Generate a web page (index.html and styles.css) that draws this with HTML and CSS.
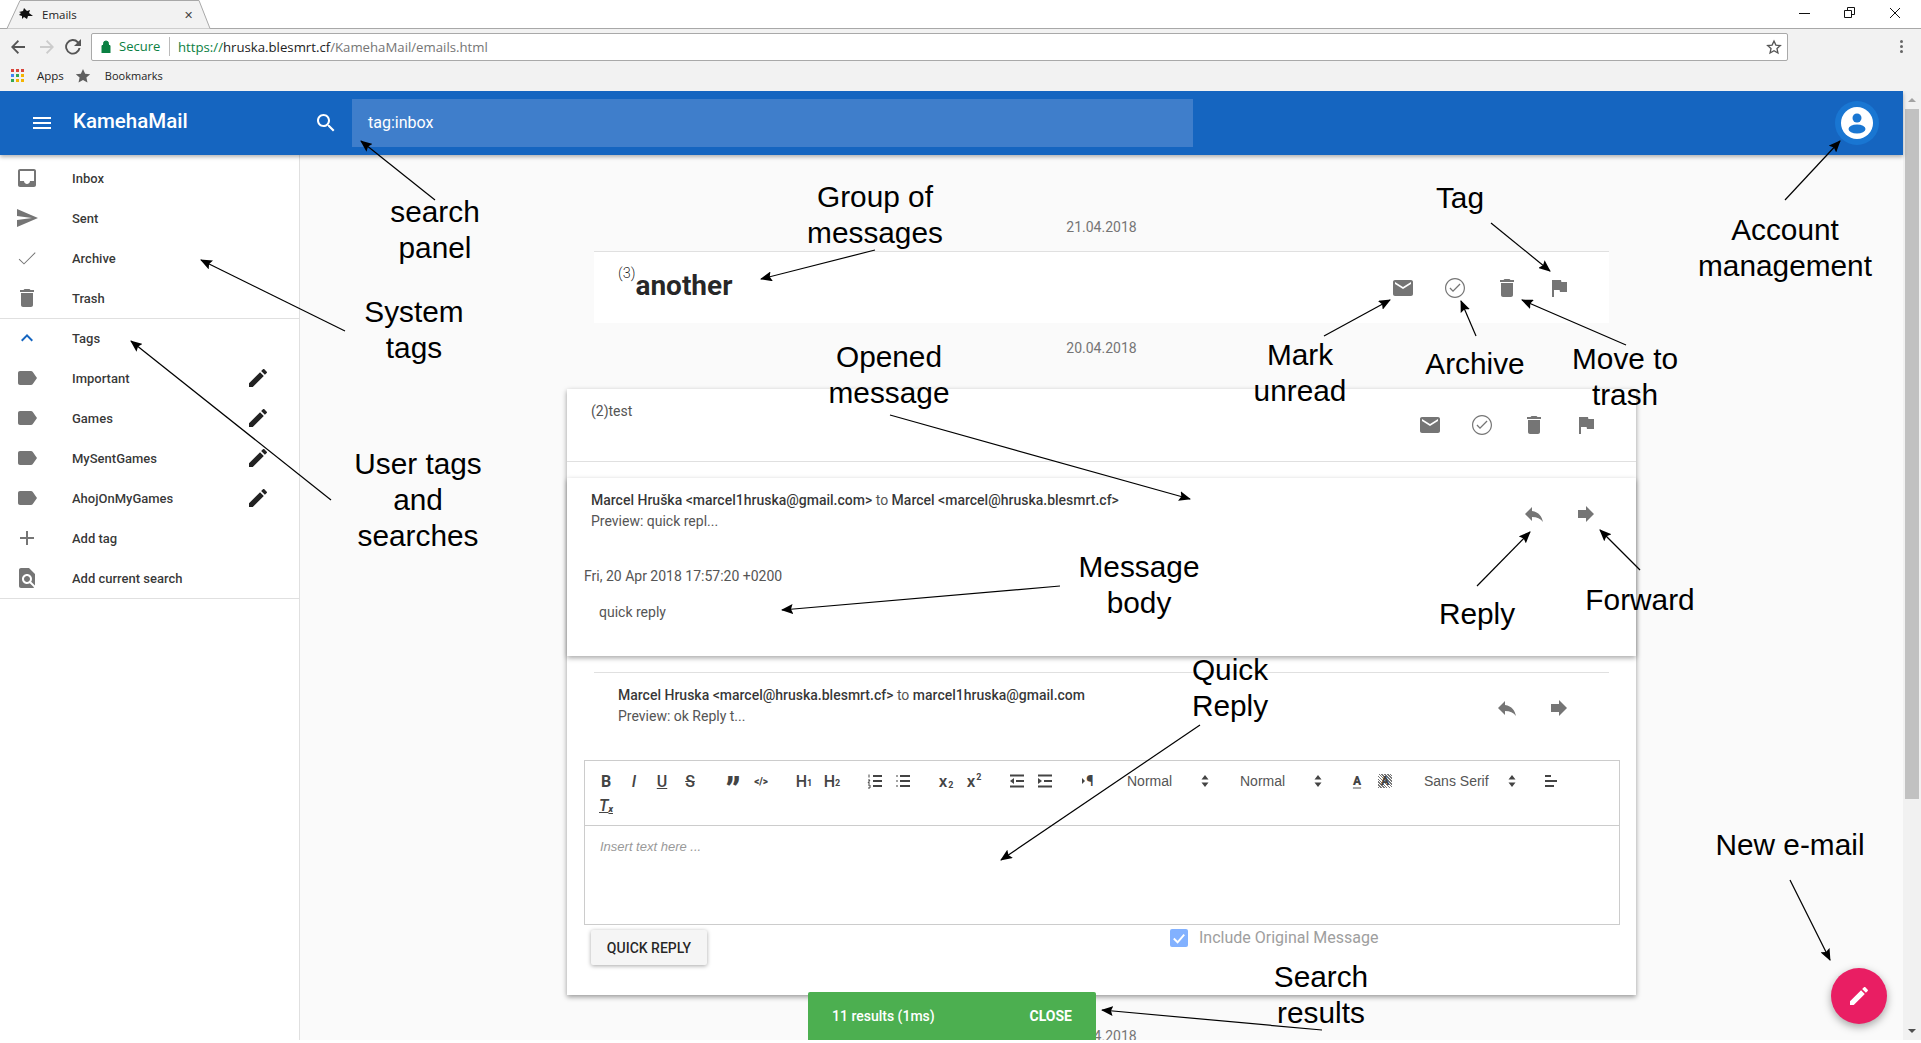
FILE: index.html
```html
<!DOCTYPE html>
<html lang="en">
<head>
    <meta charset="UTF-8">
    <title>Emails</title>
    <link rel="stylesheet" href="styles.css">
</head>
<body>
    <svg class="sprites" width="0" height="0">
        <symbol id="i-inbox" viewBox="0 0 24 24"><path d="M19 3H4.99c-1.11 0-1.98.89-1.98 2L3 19c0 1.1.88 2 1.99 2H19c1.1 0 2-.9 2-2V5c0-1.11-.9-2-2-2zm0 12h-4c0 1.66-1.35 3-3 3s-3-1.34-3-3H4.99V5H19v10z"/></symbol>
        <symbol id="i-send" viewBox="0 0 24 24"><path d="M2.01 21L23 12 2.01 3 2 10l15 2-15 2z"/></symbol>
        <symbol id="i-done" viewBox="0 0 24 24"><path d="M9 17.2L4.4 12.7l-.7.7L9 18.6 20.6 7l-.7-.7z"/></symbol>
        <symbol id="i-trash" viewBox="0 0 24 24"><path d="M6 19c0 1.1.9 2 2 2h8c1.1 0 2-.9 2-2V7H6v12zM19 4h-3.5l-1-1h-5l-1 1H5v2h14V4z"/></symbol>
        <symbol id="i-less" viewBox="0 0 24 24"><path d="M12 8l-6 6 1.41 1.41L12 10.83l4.59 4.58L18 14z"/></symbol>
        <symbol id="i-label" viewBox="0 0 24 24"><path d="M17.63 5.84C17.27 5.33 16.67 5 16 5L5 5.01C3.9 5.01 3 5.9 3 7v10c0 1.1.9 1.99 2 1.99L16 19c.67 0 1.27-.33 1.63-.84L22 12l-4.37-6.16z"/></symbol>
        <symbol id="i-edit" viewBox="0 0 24 24"><path d="M3 17.25V21h3.75L17.81 9.94l-3.75-3.75L3 17.25zM20.71 7.04c.39-.39.39-1.02 0-1.41l-2.34-2.34c-.39-.39-1.02-.39-1.41 0l-1.83 1.83 3.75 3.75 1.83-1.83z"/></symbol>
        <symbol id="i-add" viewBox="0 0 24 24"><path d="M19 13h-6v6h-2v-6H5v-2h6V5h2v6h6v2z"/></symbol>
        <symbol id="i-find" viewBox="0 0 24 24"><path d="M20 19.59V8l-6-6H6c-1.1 0-1.99.9-1.99 2L4 20c0 1.1.89 2 1.99 2H18c.45 0 .85-.15 1.19-.4l-4.43-4.43c-.8.52-1.74.83-2.76.83-2.76 0-5-2.24-5-5s2.24-5 5-5 5 2.24 5 5c0 1.02-.31 1.96-.83 2.75L20 19.59zM9 13c0 1.66 1.34 3 3 3s3-1.34 3-3-1.34-3-3-3-3 1.34-3 3z"/></symbol>
        <symbol id="i-mail" viewBox="0 0 24 24"><path d="M20 4H4c-1.1 0-1.99.9-1.99 2L2 18c0 1.1.9 2 2 2h16c1.1 0 2-.9 2-2V6c0-1.1-.9-2-2-2zm0 4l-8 5-8-5V6l8 5 8-5v2z"/></symbol>
        <symbol id="i-circle" viewBox="0 0 24 24"><path d="M12 2C6.48 2 2 6.48 2 12s4.48 10 10 10 10-4.48 10-10S17.52 2 12 2zm0 18.8c-4.85 0-8.8-3.95-8.8-8.8S7.15 3.200 12 3.200s8.800 3.950 8.800 8.800-3.950 8.800-8.800 8.800zm4.590-13.220L10 14.170l-2.590-2.580L6.500 12.500l3.500 3.500 7.500-7.500z"/></symbol>
        <symbol id="i-flag" viewBox="0 0 24 24"><path d="M14.400 6L14 4H5v17h2v-7h5.600l.4 2h7V6z"/></symbol>
        <symbol id="i-reply" viewBox="0 0 24 24"><path d="M10 9V5l-7 7 7 7v-4.100c5 0 8.500 1.600 11 5.100-1-5-4-10-11-11z"/></symbol>
        <symbol id="i-forward" viewBox="0 0 24 24"><path d="M12 8V4l8 8-8 8v-4H4V8z"/></symbol>
        <symbol id="i-search" viewBox="0 0 24 24"><path d="M15.500 14h-.79l-.28-.27C15.410 12.590 16 11.110 16 9.500 16 5.910 13.090 3 9.500 3S3 5.910 3 9.500 5.910 16 9.500 16c1.610 0 3.090-.59 4.230-1.570l.27.28v.79l5 4.990L20.490 19l-4.990-5zm-6 0C7.010 14 5 11.990 5 9.500S7.010 5 9.500 5 14 7.010 14 9.500 11.990 14 9.500 14z"/></symbol>
        <symbol id="i-menu" viewBox="0 0 24 24"><path d="M3 18h18v-2H3v2zm0-5h18v-2H3v2zm0-7v2h18V6H3z"/></symbol>
        <symbol id="i-updown" viewBox="0 0 18 18"><path d="M9 3l3.500 4.500h-7zM9 15l-3.500-4.500h7z"/></symbol>
    </svg>

    <div class="tabstrip">
        <div class="tab">
            <svg class="tab-shape" width="214" height="29"><path d="M0 28.500H7L20 .5H199L210 28.500H214" fill="#f2f2f2" stroke="#a8a8a8"/></svg>
            <svg class="favicon" width="16" height="16" viewBox="0 0 16 16"><path d="M1 5l4-1 1-3 3 3 3-1-1 3 4 3-5 0-1 3-3-2-2 2 0-3-3-1 2-2z" fill="#111"/></svg>
            <span class="tab-title">Emails</span>
            <span class="tab-close">&#x2715;</span>
        </div>
        <div class="win-buttons">
            <svg width="14" height="14"><path d="M1 7.500H12" stroke="#111"/></svg>
            <svg width="14" height="14"><path d="M1.500 4.500h7v7h-7zM4.500 4V1.500h7v7H9" fill="none" stroke="#111"/></svg>
            <svg width="14" height="14"><path d="M2 2L12 12M12 2L2 12" stroke="#111"/></svg>
        </div>
    </div>

    <div class="toolbar">
        <svg class="nav-icon" width="20" height="20" viewBox="0 0 20 20"><path d="M17 9H6.500l4.500-4.500L9.800 3 3 10l6.800 7 1.200-1.500L6.500 11H17z" fill="#555"/></svg>
        <svg class="nav-icon" width="20" height="20" viewBox="0 0 20 20"><path d="M3 9h10.500L9 4.500 10.200 3 17 10l-6.800 7L9 15.500l4.500-4.500H3z" fill="#ccc"/></svg>
        <svg class="nav-icon" width="20" height="20" viewBox="0 0 20 20"><path d="M15.500 4.500A7.700 7.700 0 1 0 17.500 11h-2a5.800 5.800 0 1 1-1.400-5.100L11 9h7V2z" fill="#555"/></svg>
        <div class="omnibox">
            <svg class="lock" width="10" height="13" viewBox="0 0 10 13"><path d="M1 5.500h8V13H1zM2.500 5.500V3.500a2.500 2.500 0 0 1 5 0v2" fill="#0b8043" stroke="#0b8043"/></svg>
            <span class="secure">Secure</span>
            <span class="url"><span class="url-scheme">https://</span><span class="url-host">hruska.blesmrt.cf</span>/KamehaMail/emails.html</span>
            <svg class="star" width="16" height="16" viewBox="0 0 24 24"><path d="M12 3l2.800 6.200 6.700.7-5 4.500 1.400 6.600L12 17.600 6.100 21l1.400-6.600-5-4.500 6.700-.7z" fill="none" stroke="#555" stroke-width="2"/></svg>
        </div>
        <div class="kebab"><i></i><i></i><i></i></div>
    </div>

    <div class="bookmarks">
        <div class="apps-grid">
            <i class="c-red"></i><i class="c-red"></i><i class="c-red"></i>
            <i class="c-blue"></i><i class="c-green"></i><i class="c-yellow"></i>
            <i class="c-green"></i><i class="c-yellow"></i><i class="c-yellow"></i>
        </div>
        <span class="bm-apps">Apps</span>
        <svg class="bm-star" width="16" height="16" viewBox="0 0 24 24"><path d="M12 1.500l3.200 7 7.600.8-5.700 5.100 1.600 7.500L12 18.100 5.300 21.900l1.600-7.500L1.200 9.300l7.600-.8z" fill="#5f5f5f"/></svg>
        <span class="bm-folder">Bookmarks</span>
    </div>

    <div class="app">
        <div class="page">
            <header class="appbar">
                <svg class="appbar-menu"><use href="#i-menu"/></svg>
                <div class="brand">KamehaMail</div>
                <svg class="appbar-search"><use href="#i-search"/></svg>
                <div class="searchbox">tag:inbox</div>
                <div class="account">
                    <svg width="32" height="32" viewBox="0 0 32 32"><circle cx="16" cy="16" r="16" fill="#fff"/><circle cx="16" cy="11" r="4.500" fill="#1976d2"/><ellipse cx="16" cy="22" rx="8.500" ry="4.500" fill="#1976d2"/></svg>
                </div>
            </header>

            <div class="content">
                <nav class="sidebar">
                    <ul class="nav-list">
                        <li><svg class="ico"><use href="#i-inbox"/></svg>Inbox</li>
                        <li><svg class="ico"><use href="#i-send"/></svg>Sent</li>
                        <li><svg class="ico"><use href="#i-done"/></svg>Archive</li>
                        <li><svg class="ico"><use href="#i-trash"/></svg>Trash</li>
                    </ul>
                    <ul class="nav-list">
                        <li><svg class="ico ico-blue"><use href="#i-less"/></svg>Tags</li>
                        <li><svg class="ico"><use href="#i-label"/></svg>Important<svg class="ico-edit"><use href="#i-edit"/></svg></li>
                        <li><svg class="ico"><use href="#i-label"/></svg>Games<svg class="ico-edit"><use href="#i-edit"/></svg></li>
                        <li><svg class="ico"><use href="#i-label"/></svg>MySentGames<svg class="ico-edit"><use href="#i-edit"/></svg></li>
                        <li><svg class="ico"><use href="#i-label"/></svg>AhojOnMyGames<svg class="ico-edit"><use href="#i-edit"/></svg></li>
                        <li><svg class="ico"><use href="#i-add"/></svg>Add tag</li>
                        <li><svg class="ico"><use href="#i-find"/></svg>Add current search</li>
                    </ul>
                </nav>

                <main class="mail">
                    <div class="date">21.04.2018</div>
                    <div class="thread">
                        <div class="thread-subject"><sup>(3)</sup><b>another</b></div>
                        <div class="actions">
                            <svg class="act"><use href="#i-mail"/></svg>
                            <svg class="act"><use href="#i-circle"/></svg>
                            <svg class="act"><use href="#i-trash"/></svg>
                            <svg class="act"><use href="#i-flag"/></svg>
                        </div>
                    </div>

                    <div class="date date-second">20.04.2018</div>
                    <section class="card">
                        <div class="card-head">
                            <div class="card-title">(2)test</div>
                            <div class="actions">
                                <svg class="act"><use href="#i-mail"/></svg>
                                <svg class="act"><use href="#i-circle"/></svg>
                                <svg class="act"><use href="#i-trash"/></svg>
                                <svg class="act"><use href="#i-flag"/></svg>
                            </div>
                        </div>

                        <article class="open-msg">
                            <div class="msg-row">
                                <div class="msg-meta">
                                    <div><b>Marcel Hruška &lt;marcel1hruska@gmail.com&gt;</b> to <b>Marcel &lt;marcel@hruska.blesmrt.cf&gt;</b></div>
                                    <div>Preview: quick repl...</div>
                                </div>
                                <div class="actions actions-msg">
                                    <svg class="act"><use href="#i-reply"/></svg>
                                    <svg class="act"><use href="#i-forward"/></svg>
                                </div>
                            </div>
                            <div class="msg-date">Fri, 20 Apr 2018 17:57:20 +0200</div>
                            <div class="msg-body">quick reply</div>
                        </article>

                        <article class="next-msg">
                            <div class="msg-row">
                                <div class="msg-meta">
                                    <div><b>Marcel Hruska &lt;marcel@hruska.blesmrt.cf&gt;</b> to <b>marcel1hruska@gmail.com</b></div>
                                    <div>Preview: ok Reply t...</div>
                                </div>
                                <div class="actions actions-next">
                                    <svg class="act"><use href="#i-reply"/></svg>
                                    <svg class="act"><use href="#i-forward"/></svg>
                                </div>
                            </div>
                        </article>

                        <div class="editor">
                            <div class="ql-toolbar">
                                <div class="ql-group">
                                    <span class="ql-btn ql-b">B</span><span class="ql-btn ql-i">I</span><span class="ql-btn ql-u">U</span><span class="ql-btn ql-s">S</span>
                                </div>
                                <div class="ql-group">
                                    <span class="ql-btn ql-quote">&#x201D;</span><span class="ql-btn ql-code">&lt;/&gt;</span>
                                </div>
                                <div class="ql-group">
                                    <span class="ql-btn ql-h">H<small>1</small></span><span class="ql-btn ql-h">H<small>2</small></span>
                                </div>
                                <div class="ql-group">
                                    <span class="ql-btn"><svg width="18" height="18" viewBox="0 0 18 18"><path d="M7 4h9M7 9h9M7 14h9" stroke="#444" stroke-width="2"/><path d="M3 2.500v3M2 8h2L2 11h2M2 13h2v3H2" stroke="#444" fill="none"/></svg></span>
                                    <span class="ql-btn"><svg width="18" height="18" viewBox="0 0 18 18"><path d="M6 4h10M6 9h10M6 14h10M2.500 4h1M2.500 9h1M2.500 14h1" stroke="#444" stroke-width="2"/></svg></span>
                                </div>
                                <div class="ql-group">
                                    <span class="ql-btn ql-h ql-script">x<sub>2</sub></span><span class="ql-btn ql-h ql-script">x<sup>2</sup></span>
                                </div>
                                <div class="ql-group">
                                    <span class="ql-btn"><svg width="18" height="18" viewBox="0 0 18 18"><path d="M2 3.500h14M2 14.500h14M8 9h8" stroke="#444" stroke-width="2"/><path d="M6 6v6L2 9z" fill="#444"/></svg></span>
                                    <span class="ql-btn"><svg width="18" height="18" viewBox="0 0 18 18"><path d="M2 3.500h14M2 14.500h14M8 9h8" stroke="#444" stroke-width="2"/><path d="M2 6v6l4-3z" fill="#444"/></svg></span>
                                </div>
                                <div class="ql-group">
                                    <span class="ql-btn ql-rtl"><i></i>&#xB6;</span>
                                </div>
                                <div class="ql-group">
                                    <div class="ql-picker ql-picker-size">Normal<svg><use href="#i-updown"/></svg></div>
                                </div>
                                <div class="ql-group">
                                    <div class="ql-picker ql-picker-size">Normal<svg><use href="#i-updown"/></svg></div>
                                </div>
                                <div class="ql-group">
                                    <span class="ql-btn ql-color">A</span><span class="ql-btn ql-bg">A</span>
                                </div>
                                <div class="ql-group">
                                    <div class="ql-picker ql-picker-font">Sans Serif<svg><use href="#i-updown"/></svg></div>
                                </div>
                                <div class="ql-group">
                                    <span class="ql-btn"><svg width="18" height="18" viewBox="0 0 18 18"><path d="M3 4h6M3 9h12M3 14h9" stroke="#444" stroke-width="2"/></svg></span>
                                </div>
                                <div class="ql-break"></div>
                                <div class="ql-group">
                                    <span class="ql-btn ql-clean">T<sub>x</sub></span>
                                </div>
                            </div>
                            <div class="ql-editor">Insert text here ...</div>
                        </div>

                        <div class="reply-row">
                            <button class="btn-reply">QUICK REPLY</button>
                            <label class="include">
                                <span class="checkbox"><svg width="18" height="18" viewBox="0 0 19 19"><path d="M4 10l4 4 7-8" fill="none" stroke="#fff" stroke-width="2"/></svg></span>
                                Include Original Message
                            </label>
                        </div>
                    </section>
                    <div class="date date-third">19.04.2018</div>
                </main>
            </div>
        </div>
        <div class="scrollbar">
            <span class="sb-up"></span>
            <span class="sb-thumb"></span>
            <span class="sb-down"></span>
        </div>
    </div>

    <!-- things floating over the app -->
    <div class="snackbar"><span>11 results (1ms)</span><b>CLOSE</b></div>
    <div class="fab"><svg width="24" height="24"><use href="#i-edit"/></svg></div>

    <!-- hand drawn notes over the screenshot -->
    <svg class="arrows" width="1921" height="1043">
        <defs>
            <marker id="tip" viewBox="0 0 12 10" refX="11" refY="5" markerWidth="12" markerHeight="10" orient="auto" markerUnits="userSpaceOnUse"><path d="M0 0L12 5L0 10L2 5z" fill="#000"/></marker>
        </defs>
        <g stroke="#000" stroke-width="1.200">
            <line x1="435" y1="200" x2="361" y2="141" marker-end="url(#tip)"/>
            <line x1="345" y1="331" x2="201" y2="260" marker-end="url(#tip)"/>
            <line x1="331" y1="500" x2="131" y2="341" marker-end="url(#tip)"/>
            <line x1="875" y1="250" x2="761" y2="279" marker-end="url(#tip)"/>
            <line x1="1491" y1="223" x2="1550" y2="271" marker-end="url(#tip)"/>
            <line x1="1785" y1="200" x2="1840" y2="141" marker-end="url(#tip)"/>
            <line x1="1324" y1="336" x2="1390" y2="300" marker-end="url(#tip)"/>
            <line x1="1476" y1="336" x2="1461" y2="301" marker-end="url(#tip)"/>
            <line x1="1626" y1="345" x2="1522" y2="300" marker-end="url(#tip)"/>
            <line x1="890" y1="415" x2="1190" y2="499" marker-end="url(#tip)"/>
            <line x1="1060" y1="586" x2="782" y2="610" marker-end="url(#tip)"/>
            <line x1="1477" y1="586" x2="1530" y2="532" marker-end="url(#tip)"/>
            <line x1="1640" y1="570" x2="1600" y2="530" marker-end="url(#tip)"/>
            <line x1="1200" y1="725" x2="1001" y2="860" marker-end="url(#tip)"/>
            <line x1="1790" y1="880" x2="1830" y2="960" marker-end="url(#tip)"/>
            <line x1="1322" y1="1030" x2="1102" y2="1010" marker-end="url(#tip)"/>
        </g>
    </svg>
    <div class="note n-search">search<br>panel</div>
    <div class="note n-group">Group of<br>messages</div>
    <div class="note n-tag">Tag</div>
    <div class="note n-account">Account<br>management</div>
    <div class="note n-system">System<br>tags</div>
    <div class="note n-mark">Mark<br>unread</div>
    <div class="note n-archive">Archive</div>
    <div class="note n-move">Move to<br>trash</div>
    <div class="note n-opened">Opened<br>message</div>
    <div class="note n-user">User tags<br>and<br>searches</div>
    <div class="note n-body">Message<br>body</div>
    <div class="note n-reply">Reply</div>
    <div class="note n-forward">Forward</div>
    <div class="note n-quick">Quick<br>Reply</div>
    <div class="note n-new">New e-mail</div>
    <div class="note n-results">Search<br>results</div>
</body>
</html>
```

FILE: styles.css
```css
* {
    margin: 0;
    padding: 0;
    box-sizing: border-box;
}

body {
    position: relative;
    width: 1921px;
    height: 1043px;
    overflow: hidden;
    background: #fff;
    font-family: Roboto, sans-serif;
    font-size: 14px;
    color: rgba(0, 0, 0, 0.87);
}

.sprites {
    position: absolute;
}

/* Browser chrome */
.tabstrip {
    display: flex;
    justify-content: space-between;
    height: 29px;
    border-bottom: 1px solid #a8a8a8;
    background: #fff;
}

.tab {
    position: relative;
    display: flex;
    align-items: center;
    width: 214px;
    height: 29px;
    padding: 0 16px 0 18px;
    font-family: "Open Sans", sans-serif;
    font-size: 11.5px;
    color: #222;
}

.tab-shape {
    position: absolute;
    top: 0;
    left: 0;
}

.favicon,
.tab-title,
.tab-close {
    position: relative;
}

.tab-title {
    margin-left: 8px;
    flex: 1;
}

.tab-close {
    margin-right: 5px;
    font-size: 11px;
    color: #444;
}

.win-buttons {
    display: flex;
    gap: 31px;
    padding: 6px 19px 0 0;
}

.toolbar {
    display: flex;
    align-items: center;
    height: 33px;
    padding: 2px 0 0 8px;
    background: #f2f2f2;
}

.nav-icon {
    margin-right: 6px;
}

.nav-icon:first-child {
    margin-right: 9px;
}

.omnibox {
    display: flex;
    align-items: center;
    width: 1697px;
    height: 28px;
    margin-left: 2px;
    padding: 0 5px 0 9px;
    background: #fff;
    border: 1px solid #a9a9a9;
    border-radius: 2px;
    font-family: "Open Sans", sans-serif;
    font-size: 13.2px;
    color: #757575;
}

.lock {
    margin-right: 8px;
    flex: none;
}

.secure {
    width: 51px;
    height: 19px;
    margin-right: 8px;
    border-right: 1px solid #bbb;
    color: #0b8043;
    line-height: 18px;
    font-size: 13px;
}

.url {
    flex: 1;
    white-space: nowrap;
}

.url-scheme {
    color: #0b8043;
}

.url-host {
    color: #222;
}

.kebab {
    display: flex;
    flex-direction: column;
    gap: 2px;
    margin-left: 112px;
}

.kebab i {
    width: 3px;
    height: 3px;
    border-radius: 50%;
    background: #666;
}

.bookmarks {
    display: flex;
    align-items: center;
    height: 29px;
    padding: 0 0 2px 11px;
    background: #f2f2f2;
    font-family: "Open Sans", sans-serif;
    font-size: 11.5px;
    color: #222;
}

.apps-grid {
    display: grid;
    grid-template-columns: repeat(3, 3px);
    grid-auto-rows: 3px;
    gap: 2px;
}

.c-red { background: #d9463c; }
.c-blue { background: #4285f4; }
.c-green { background: #34a853; }
.c-yellow { background: #f4b400; }

.bm-apps {
    margin: 0 11px 0 13px;
}

.bm-star {
    margin-right: 14px;
}

.bm-folder {
    font-size: 11px;
}

/* App */
.app {
    display: flex;
    height: 949px;
    overflow: hidden;
}

.page {
    display: flex;
    flex-direction: column;
    flex: 1;
    min-width: 0;
}

.appbar {
    position: relative;
    z-index: 2;
    display: flex;
    align-items: center;
    flex: none;
    height: 64px;
    background: #1565c0;
    color: #fff;
    box-shadow: 0 2px 4px rgba(0, 0, 0, 0.3);
}

.appbar svg {
    fill: #fff;
}

.appbar-menu {
    width: 24px;
    height: 24px;
    margin-left: 30px;
}

.brand {
    width: 241px;
    margin-left: 19px;
    margin-bottom: 4px;
    font-size: 20.5px;
    font-weight: 500;
}

.appbar-search {
    width: 24px;
    height: 24px;
}

.searchbox {
    display: flex;
    align-items: center;
    width: 841px;
    height: 48px;
    margin-left: 14px;
    padding: 0 0 2px 16px;
    background: #3f7ecb;
    font-size: 16px;
}

.account {
    display: flex;
    align-items: center;
    justify-content: center;
    width: 44px;
    height: 44px;
    margin-left: auto;
    margin-right: 24px;
    border-radius: 50%;
    background: #1976d2;
}

.content {
    display: flex;
    flex: 1;
    min-height: 0;
}

.sidebar {
    flex: none;
    width: 300px;
    padding-top: 3px;
    background: #fff;
    border-right: 1px solid #e0e0e0;
}

.nav-list {
    list-style: none;
    border-bottom: 1px solid #e0e0e0;
}

.nav-list + .nav-list {
    margin-top: -1px;
}

.nav-list li {
    display: flex;
    align-items: center;
    height: 40px;
    padding: 0 29px 0 15px;
    font-size: 13px;
    font-weight: 500;
    color: rgba(0, 0, 0, 0.8);
}

.ico {
    width: 24px;
    height: 24px;
    margin-right: 33px;
    fill: #757575;
}

.ico-blue {
    fill: #1565c0;
}

.ico-edit {
    width: 24px;
    height: 24px;
    margin-left: auto;
    fill: #222;
}

.mail {
    flex: 1;
    min-width: 0;
    padding: 62px 0 0;
    background: #fafafa;
    display: flex;
    flex-direction: column;
    align-items: center;
    font-weight: 400;
}

.date {
    height: 20px;
    color: #757575;
    font-size: 14px;
    line-height: 20px;
}

.date-second {
    margin-top: 15px;
}

.date-third {
    margin-top: 31px;
}

.thread {
    display: flex;
    align-items: center;
    justify-content: space-between;
    flex: none;
    width: 1015px;
    height: 72px;
    margin-top: 14px;
    padding-left: 24px;
    background: #fff;
    border-top: 1px solid #e0e0e0;
}

.thread-subject {
    margin-bottom: 5px;
    font-size: 28px;
    color: rgba(0, 0, 0, 0.85);
    white-space: nowrap;
}

.thread-subject sup {
    font-size: 14.5px;
    font-weight: 300;
    vertical-align: 17px;
    line-height: 0;
}

.thread-subject b {
    font-weight: 700;
}

.actions {
    display: flex;
    padding-right: 24px;
}

.act {
    width: 24px;
    height: 24px;
    margin: 0 14px;
    fill: #757575;
}

.card {
    flex: none;
    width: 1069px;
    height: 606px;
    margin-top: 31px;
    background: #fff;
    box-shadow: 0 2px 5px rgba(0, 0, 0, 0.4);
}

.card-head {
    display: flex;
    justify-content: space-between;
    height: 73px;
    padding: 13px 0 0 24px;
    border-bottom: 1px solid #e0e0e0;
}

.card-title {
    line-height: 18px;
    color: #555;
    font-weight: 400;
}

.card-head .actions {
    padding-top: 11px;
}

.open-msg {
    height: 178px;
    margin-top: 16px;
    padding-top: 12px;
    box-shadow: 0 2px 5px rgba(0, 0, 0, 0.35);
}

.msg-row {
    display: flex;
    justify-content: space-between;
}

.msg-meta {
    padding-left: 24px;
    line-height: 21px;
    color: #555;
}

.msg-meta b {
    font-weight: 500;
    color: rgba(0, 0, 0, 0.8);
}

.actions-msg {
    padding: 12px 24px 0 0;
}

.msg-date {
    margin: 34px 0 0 17px;
    line-height: 20px;
    color: #555;
}

.msg-body {
    margin: 16px 0 0 32px;
    line-height: 20px;
    color: #555;
}

.next-msg {
    height: 88px;
    margin: 16px 27px 0;
    padding-top: 12px;
    border-top: 1px solid #e0e0e0;
}

.actions-next {
    padding: 11px 24px 0 0;
}

.editor {
    margin: 0 16px 0 17px;
    border: 1px solid #ccc;
    font-family: "Liberation Sans", Arial, sans-serif;
}

.ql-toolbar {
    display: flex;
    flex-wrap: wrap;
    height: 65px;
    padding: 8px 8px 8px 7px;
    border-bottom: 1px solid #ccc;
    color: #444;
}

.ql-group {
    display: flex;
    margin-right: 15px;
}

.ql-break {
    flex-basis: 100%;
    height: 0;
}

.ql-btn {
    display: flex;
    align-items: center;
    justify-content: center;
    width: 28px;
    height: 24px;
    font-family: Roboto, sans-serif;
    font-size: 16px;
    font-weight: 500;
}

.ql-b { font-weight: 700; }
.ql-i { font-style: italic; }
.ql-u { text-decoration: underline; }
.ql-s { text-decoration: line-through; }

.ql-quote {
    padding-top: 21px;
    font-size: 36px;
    font-weight: 900;
    line-height: 14px;
}

.ql-code {
    font-size: 10px;
    font-weight: 900;
}

.ql-h small,
.ql-h sub,
.ql-h sup {
    font-size: 9px;
    font-weight: 700;
    line-height: 1;
}

.ql-h small {
    margin-top: 5px;
}

.ql-script {
    font-size: 17px;
}

.ql-h sub {
    margin-top: 9px;
    margin-left: 1px;
}

.ql-h sup {
    margin-bottom: 7px;
    margin-left: 1px;
}

.ql-rtl {
    font-size: 15px;
}

.ql-rtl i {
    width: 0;
    height: 0;
    border-left: 3px solid #444;
    border-top: 3px solid transparent;
    border-bottom: 3px solid transparent;
    margin-right: 1px;
}

.ql-color,
.ql-bg {
    font-size: 12px;
    font-weight: 900;
}

.ql-color {
    text-decoration: underline;
    text-decoration-color: #aaa;
    text-decoration-thickness: 2px;
    text-underline-offset: 2px;
}

.ql-bg {
    background: repeating-linear-gradient(45deg, #777 0 1px, #fff 1px 2px);
    background-size: 14px 14px;
    background-position: center;
    background-repeat: no-repeat;
}

.ql-clean {
    font-style: italic;
    text-decoration: underline;
}

.ql-clean sub {
    margin-top: 8px;
    font-size: 9px;
    font-weight: 900;
    line-height: 1;
}

.ql-picker {
    display: flex;
    align-items: center;
    justify-content: space-between;
    height: 24px;
    padding-left: 10px;
    font-size: 14px;
    color: #555;
}

.ql-picker svg {
    width: 18px;
    height: 18px;
    fill: #444;
    margin-right: 1px;
}

.ql-picker-size {
    width: 98px;
}

.ql-picker-font {
    width: 108px;
}

.ql-editor {
    height: 98px;
    padding: 11px 15px;
    font-size: 13px;
    font-style: italic;
    line-height: 20px;
    color: #999;
}

.reply-row {
    display: flex;
    align-items: flex-start;
    padding: 5px 0 0 24px;
}

.btn-reply {
    width: 116px;
    height: 35px;
    border: 0;
    border-radius: 2px;
    background: #f5f5f5;
    box-shadow: 0 1px 4px rgba(0, 0, 0, 0.35);
    font-family: Roboto, sans-serif;
    font-size: 14px;
    font-weight: 500;
    color: rgba(0, 0, 0, 0.85);
}

.include {
    display: flex;
    align-items: center;
    gap: 11px;
    margin: -2px 0 0 463px;
    font-size: 16px;
    color: #9e9e9e;
}

.checkbox {
    display: block;
    width: 18px;
    height: 18px;
    border-radius: 2px;
    background: #82b1ff;
}

.checkbox svg {
    display: block;
}

.scrollbar {
    position: relative;
    flex: none;
    width: 18px;
    background: #f1f1f1;
}

.sb-thumb {
    position: absolute;
    top: 18px;
    left: 2px;
    width: 14px;
    height: 690px;
    background: #c1c1c1;
}

.sb-up,
.sb-down {
    position: absolute;
    left: 5px;
    width: 0;
    height: 0;
    border-left: 4px solid transparent;
    border-right: 4px solid transparent;
}

.sb-up {
    top: 7px;
    border-bottom: 4px solid #a3a3a3;
}

.sb-down {
    bottom: 7px;
    border-top: 4px solid #505050;
}

.snackbar {
    position: absolute;
    z-index: 3;
    left: 808px;
    top: 992px;
    display: flex;
    align-items: center;
    justify-content: space-between;
    width: 288px;
    height: 48px;
    padding: 0 24px;
    background: #4caf50;
    border-radius: 2px 2px 0 0;
    color: #fff;
    font-weight: 500;
}

.snackbar b {
    font-weight: 700;
}

.fab {
    position: absolute;
    z-index: 3;
    left: 1831px;
    top: 968px;
    display: flex;
    align-items: center;
    justify-content: center;
    width: 56px;
    height: 56px;
    border-radius: 50%;
    background: #e91e63;
    fill: #fff;
    box-shadow: 0 3px 8px rgba(0, 0, 0, 0.35);
}

/* Notes over the screenshot */
.arrows {
    position: absolute;
    z-index: 4;
    top: 0;
    left: 0;
    pointer-events: none;
}

.note {
    position: absolute;
    z-index: 4;
    width: 240px;
    font-family: "Liberation Sans", Arial, sans-serif;
    font-size: 29.8px;
    line-height: 36px;
    text-align: center;
    color: #000;
}

.n-search { left: 315px; top: 194px; }
.n-group { left: 755px; top: 179px; }
.n-tag { left: 1340px; top: 180px; }
.n-account { left: 1665px; top: 212px; }
.n-system { left: 294px; top: 294px; }
.n-mark { left: 1180px; top: 337px; }
.n-archive { left: 1355px; top: 346px; }
.n-move { left: 1505px; top: 341px; }
.n-opened { left: 769px; top: 339px; }
.n-user { left: 298px; top: 446px; }
.n-body { left: 1019px; top: 549px; }
.n-reply { left: 1357px; top: 596px; }
.n-forward { left: 1520px; top: 582px; }
.n-quick { left: 1110px; top: 652px; }
.n-new { left: 1670px; top: 827px; }
.n-results { left: 1201px; top: 959px; }
```
